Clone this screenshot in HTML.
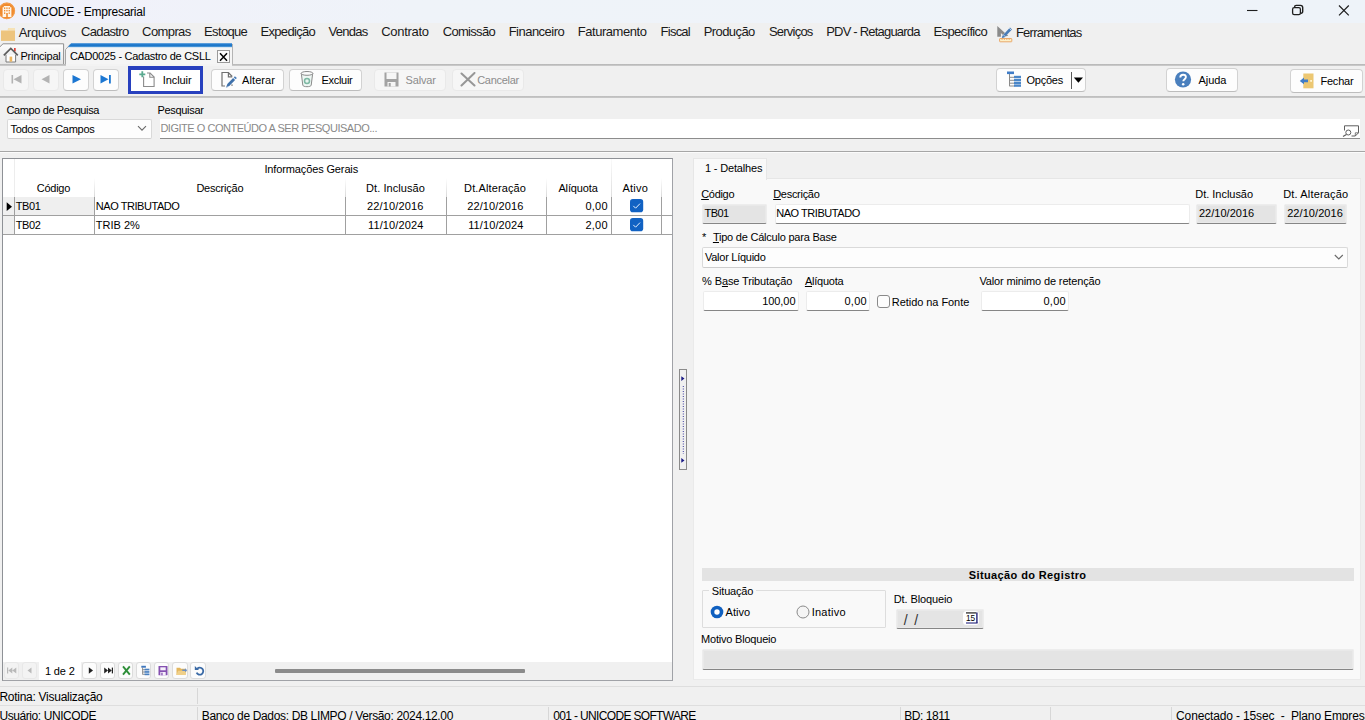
<!DOCTYPE html>
<html lang="pt-BR"><head><meta charset="utf-8"><title>UNICODE - Empresarial</title>
<style>
*{box-sizing:border-box;margin:0;padding:0}
html,body{width:1365px;height:720px;overflow:hidden;background:#f0f0f0}
body{font-family:"Liberation Sans",sans-serif;font-size:11px;color:#000}
#app{position:relative;width:1365px;height:720px;overflow:hidden;background:#f0f0f0}
#app div,#app span,#app svg{position:absolute}
.t{white-space:pre;display:block}
.t u{text-decoration:underline;text-underline-offset:1px;text-decoration-thickness:1px}
.btn{background:#fdfdfd;border:1px solid #d2d2d2;border-bottom-color:#bdbdbd;border-radius:4px}
.btn.dis{background:#f6f6f6;border-color:#e9e9e9}
.inp{background:#fff;border:1px solid #ececec;border-bottom:1px solid #868686;border-radius:2px}
.inp.ro{background:#e4e4e4;border-color:#ededed;border-bottom-color:#868686;box-shadow:inset 0 0 0 1px #e9e9e9}
.vl{width:1px;background:#a0a0a0}
.hl{height:1px;background:#a0a0a0}
.nb{background:#fcfcfc;border:1px solid #dcdcdc;border-radius:3px}
.nb.dis{background:#f3f3f3;border-color:#e8e8e8}
.sd{width:1px;background:#d7d7d7}

</style></head><body>
<div id="app">
<!-- title bar -->
<div id="title" style="left:0;top:0;width:1365px;height:23px;background:linear-gradient(90deg,#f1f1fa,#eff3f9 30%,#eef3f9)"></div>
<svg style="left:-3px;top:2px" width="19" height="19" viewBox="0 0 19 19"><circle cx="9.800" cy="8.900" r="8.300" fill="#f08a2e"/><circle cx="9.800" cy="8.900" r="7.700" fill="none" stroke="#f6a75c" stroke-width=".7"/><path d="M5.600 15V5.200h1.200V3.900h6.300v1.300h1.300V15z" fill="#fff6ea"/><g fill="#f08a2e"><rect x="7" y="5.400" width="1.300" height="1.500"/><rect x="9.300" y="5.400" width="1.300" height="1.500"/><rect x="11.600" y="5.400" width="1.300" height="1.500"/><rect x="7" y="7.900" width="1.300" height="1.500"/><rect x="9.300" y="7.900" width="1.300" height="1.500"/><rect x="11.600" y="7.900" width="1.300" height="1.500"/><rect x="7" y="10.400" width="1.300" height="1.500"/><rect x="11.600" y="10.400" width="1.300" height="1.500"/><rect x="9.200" y="11" width="1.600" height="4"/></g></svg>
<svg style="left:1240px;top:0" width="125" height="23" viewBox="0 0 125 23" fill="none" stroke="#1f1f1f" stroke-width="1.100"><path d="M7 10.500h10.500"/><rect x="52.600" y="7.700" width="7.800" height="7" rx="1.600" stroke-width="1.300"/><path d="M54.600 7.400v-.4a1.600 1.600 0 0 1 1.600-1.600h4.300a2.200 2.200 0 0 1 2.200 2.200v4a1.600 1.600 0 0 1-1.600 1.600h-.5" stroke-width="1.400"/><path d="M99 5.500l9.800 9.800M108.800 5.500l-9.800 9.800" stroke-width="1.200"/></svg>
<!-- menu folder + ferramentas icons -->
<svg style="left:0;top:26px" width="18" height="18" viewBox="0 0 18 18"><path d="M7.800 4.800L8.600 2h6.400v3z" fill="#f6e2b6"/><rect x="1" y="4.600" width="14" height="10.300" fill="#edc47d"/><path d="M1 4.600h6.800L8.600 2" fill="none" stroke="#f3d9a3" stroke-width=".6"/></svg>
<svg style="left:997px;top:25px" width="17" height="18" viewBox="0 0 17 18"><path d="M0.300 1v10.700h3.600V8l2 2L8 8z" fill="#8a8a8a"/><path d="M7.200 11.700l4-1 -1.500-1.500z" fill="#8a8a8a"/><path d="M5.400 10.800L13 2.600l2 1.900-7.700 8.100-2.500.5z" fill="#4a7db8"/><path d="M12.300 3.300l1.900 1.900M6.300 9.700l1.900 1.900" stroke="#eef3fa" stroke-width=".7"/><rect x="2.600" y="13.500" width="12.200" height="3.300" rx=".5" fill="#fdf0c8" stroke="#e8a160" stroke-width=".9"/><path d="M5 13.500v1.500M7.400 13.500v1.500M9.800 13.500v1.500M12.200 13.500v1.500" stroke="#e8a160" stroke-width=".8"/></svg>
<!-- tab strip -->
<svg style="left:0;top:42px" width="240" height="24" viewBox="0 0 240 24"><defs><linearGradient id="tg" x1="0" y1="0" x2="0" y2="1"><stop offset="0" stop-color="#fdfdfd"/><stop offset="1" stop-color="#e6e6e6"/></linearGradient><linearGradient id="bl" x1="0" y1="0" x2="0" y2="1"><stop offset="0" stop-color="#2a82d3"/><stop offset=".7" stop-color="#1b74c6"/><stop offset="1" stop-color="#7dbbea"/></linearGradient></defs><path d="M-1 5.700L3 1.800h60.600V22.500H-1z" fill="url(#tg)" stroke="#8f8f8f" stroke-width="1"/><path d="M65.500 23V7.600L70.800 1.800H232.500V23z" fill="#f5f5f5"/><path d="M65.500 23V7.600L70.800 1.800" fill="none" stroke="#a6a6a6" stroke-width="1"/><path d="M232.500 2V23" stroke="#b4b4b4" stroke-width="1"/><path d="M71.200 1.300H232v3.900H67.600z" fill="url(#bl)"/></svg>
<svg style="left:3px;top:46px" width="16" height="18" viewBox="0 0 16 18"><rect x="11" y="2" width="1.700" height="3.500" fill="#e0453a"/><path d="M3 8.800V16h9.600V8.800" fill="#fdfdfd" stroke="#7a7a7a" stroke-width="1"/><path d="M0.800 9.300L7.800 2.500l7 6.800" fill="none" stroke="#5c5c5c" stroke-width="1.700" stroke-linejoin="miter"/><rect x="6.600" y="10.600" width="2.600" height="5" fill="#eeb65f"/></svg>
<div style="left:216.5px;top:49.5px;width:13px;height:13.5px;background:#fbfbfb;border:1px solid #9a9a9a"></div>
<svg style="left:216.500px;top:49.500px" width="13" height="14" viewBox="0 0 13 14"><path d="M3 3.300l7 7.400M10 3.300l-7 7.400" stroke="#000" stroke-width="1.500"/></svg>
<div style="left:0;top:64px;width:1365px;height:2px;background:linear-gradient(#b4b4b4,#cfcfcf)"></div>
<div style="left:66px;top:64px;width:166px;height:2px;background:#f3f3f3"></div>
<!-- toolbar -->
<div class="btn dis" style="left:2.6px;top:68.600px;width:26.800px;height:22.400px"></div>
<div class="btn dis" style="left:32.6px;top:68.600px;width:26.800px;height:22.400px"></div>
<div class="btn" style="left:62.6px;top:68.600px;width:26.800px;height:22.400px"></div>
<div class="btn" style="left:92.6px;top:68.600px;width:26.800px;height:22.400px"></div>
<svg style="left:2.700px;top:68.300px" width="116" height="22" viewBox="0 0 116 22"><g fill="#b3b3b3"><rect x="8.500" y="7" width="1.600" height="8.500"/><path d="M18.500 7v8.500L10.500 11.250z"/><path d="M46.500 7v8.500L38.500 11.250z"/></g><g fill="#1b76d2"><path d="M69.500 7v8.500l8.500-4.250z"/><path d="M97.500 7v8.500l8-4.250z"/><rect x="106" y="7" width="1.800" height="8.500"/></g></svg>
<div style="left:128px;top:66px;width:75px;height:27.800px;background:#fff;border:solid #2740be;border-width:4px 3.600px 3.800px 3.500px"></div>
<svg style="left:138px;top:70px" width="18" height="18" viewBox="0 0 18 18" fill="none"><path d="M5.600 6.500v10h10.500V7l-4-4H9" stroke="#8c8c8c" stroke-width="1.100"/><path d="M11.800 3v4.300h4.300" stroke="#8c8c8c" stroke-width="1.100"/><path d="M4.300 1.300v6M1.300 4.300h6" stroke="#5aa98f" stroke-width="1.800"/></svg>
<div class="btn" style="left:211px;top:69px;width:73px;height:22px"></div>
<svg style="left:220px;top:71px" width="18" height="18" viewBox="0 0 18 18" fill="none"><path d="M5 15h-3V1.500h6.400l3.800 4" stroke="#707070" stroke-width="1.200"/><path d="M8.400 1.500v4.300h3.800" stroke="#707070" stroke-width="1.200"/><path d="M11.300 14.200h1.400" stroke="#707070" stroke-width="1.200"/><path d="M6.300 16.200l1-3.200 5.800-6 2 1.900-5.800 6z" fill="#3f71ab"/><path d="M13.700 6.400l1.200-1.200 2 1.900-1.200 1.200z" fill="#4a7db8"/><path d="M5.900 16.700l.8-2.300 1.500 1.500z" fill="#8aa7cc"/></svg>
<div class="btn" style="left:289px;top:69px;width:73px;height:22px"></div>
<svg style="left:299px;top:70px" width="16" height="18" viewBox="0 0 16 18" fill="none"><path d="M2.300 3.400l1.500 11.800c.2 1 2 1.500 4.200 1.500s4-.5 4.200-1.500l1.500-11.800" fill="#eef7f3" stroke="#8a8a8a" stroke-width="1"/><ellipse cx="8" cy="3.400" rx="5.900" ry="1.900" fill="#fbfbfb" stroke="#8a8a8a" stroke-width="1"/><circle cx="8" cy="11" r="2.500" fill="#e9f5f0" stroke="#7db8a3" stroke-width="1.500"/></svg>
<div class="btn dis" style="left:374px;top:69px;width:72px;height:22px"></div>
<svg style="left:384px;top:72px" width="15" height="15" viewBox="0 0 15 15"><path d="M0.500 0.500h14v14h-14z" fill="#a3a3a3"/><rect x="2.500" y="0.500" width="10" height="6.500" fill="#f6f6f6"/><rect x="3.500" y="10" width="8" height="4.500" fill="#f6f6f6"/><rect x="4.700" y="11" width="2" height="3.500" fill="#a3a3a3"/></svg>
<div class="btn dis" style="left:452px;top:69px;width:72px;height:22px"></div>
<svg style="left:460px;top:72px" width="16" height="15" viewBox="0 0 16 15"><path d="M1.500 1.500l13 12M14.500 1l-13 12.500" stroke="#979797" stroke-width="2" stroke-linecap="round"/></svg>
<div class="btn" style="left:996px;top:68px;width:90px;height:23.500px"></div>
<svg style="left:1006px;top:71px" width="16" height="16" viewBox="0 0 16 16"><path d="M3.500 3v12.200M3.500 6.300h5M3.500 9.300h5M3.500 12.200h5M3.500 15h5" stroke="#8a8a8a" stroke-width="1" fill="none"/><rect x="1" y="0.500" width="7" height="2.600" fill="#3f7cc7"/><g fill="#4a86c8"><rect x="8" y="4.800" width="7" height="2.400"/><rect x="8" y="7.900" width="7" height="2.400"/><rect x="8" y="10.900" width="7" height="2.400"/><rect x="8" y="13.600" width="7" height="2.200"/></g></svg>
<div style="left:1071px;top:71.500px;width:1.400px;height:17px;background:#5a5a5a"></div>
<svg style="left:1073px;top:77px" width="11" height="7" viewBox="0 0 11 7"><path d="M0.800 0.400h9.200L5.400 5.800z" fill="#000"/></svg>
<div class="btn" style="left:1165.500px;top:68px;width:72px;height:23.500px"></div>
<svg style="left:1174px;top:71px" width="18" height="18" viewBox="0 0 18 18"><circle cx="9" cy="8.500" r="8.100" fill="#4a7fbd"/><path d="M6.300 6.400c0-1.700 1.200-2.700 2.800-2.700s2.800 1 2.800 2.400c0 1.300-.8 1.800-1.600 2.400-.7.500-1 .9-1 1.800" fill="none" stroke="#fff" stroke-width="1.900"/><circle cx="9.200" cy="13.200" r="1.250" fill="#fff"/></svg>
<div class="btn" style="left:1289.500px;top:69px;width:73.500px;height:23.500px"></div>
<svg style="left:1299px;top:72px" width="16" height="17" viewBox="0 0 16 17"><rect x="4.300" y="1.500" width="10.200" height="14.800" fill="#ecc772"/><rect x="11.200" y="8" width="1.800" height="1.800" fill="#fff3d0"/><path d="M9 7.600v2.600H5v2L0.800 8.900 5 5.600v2z" fill="#3f7cc7"/></svg>
<div style="left:0;top:96px;width:1365px;height:2px;background:linear-gradient(#bcbcbc,#c9c9c9)"></div>
<!-- search panel -->
<div style="left:7px;top:118.500px;width:145px;height:20px;background:#fdfdfd;border:1px solid #d9d9d9;border-bottom-color:#cfcfcf;border-radius:2px"></div>
<svg style="left:137px;top:125px" width="10" height="7" viewBox="0 0 10 7"><path d="M1 1.200l4 4 4-4" stroke="#6a6a6a" stroke-width="1.100" fill="none"/></svg>
<div style="left:159.500px;top:118.700px;width:1200.300px;height:20px;background:#fff;border-bottom:1px solid #8c8c8c"></div>
<svg style="left:1342px;top:124px" width="18" height="14" viewBox="0 0 18 14" fill="none" stroke="#5e5e5e" stroke-width="1"><path d="M2.500 6.500V1.800h14v7l-3.200 3.200H9.500"/><path d="M13.300 12V8.800h3.200" stroke-width=".8"/><circle cx="6.300" cy="8.500" r="2.500" fill="#fff"/><path d="M4.400 10.400L1 12.600" stroke-width="1.200"/></svg>
<div style="left:0;top:151px;width:1365px;height:1px;background:#a6a6a6"></div><div style="left:0;top:152px;width:1365px;height:1px;background:#fbfbfb"></div>
<!-- GRID -->
<div id="grid" style="left:2px;top:158px;width:671px;height:523px;background:#fff;border:1px solid;border-color:#8e9196 #a0a2a7 #a0a2a7 #8e9196"></div>
<!-- header gradient separators -->
<div style="left:14px;top:159px;width:1px;height:38px;background:#ededed"></div>
<div style="left:94px;top:178px;width:1px;height:19px;background:linear-gradient(#fff,#d9d9d9)"></div>
<div style="left:345px;top:178px;width:1px;height:19px;background:linear-gradient(#fff,#d9d9d9)"></div>
<div style="left:446px;top:178px;width:1px;height:19px;background:linear-gradient(#fff,#d9d9d9)"></div>
<div style="left:546px;top:178px;width:1px;height:19px;background:linear-gradient(#fff,#d9d9d9)"></div>
<div style="left:610.500px;top:159px;width:1px;height:38px;background:linear-gradient(#fafafa,#dedede)"></div>
<div style="left:661px;top:178px;width:1px;height:19px;background:linear-gradient(#fff,#d9d9d9)"></div>
<!-- rows -->
<div style="left:3px;top:197px;width:11px;height:37px;background:#f0f0f0"></div>
<div style="left:15px;top:197px;width:79px;height:18px;background:#efefef"></div>
<div class="vl" style="left:14px;top:197px;height:38px"></div>
<div class="vl" style="left:94px;top:197px;height:38px"></div>
<div class="vl" style="left:345px;top:197px;height:38px"></div>
<div class="vl" style="left:446px;top:197px;height:38px"></div>
<div class="vl" style="left:546px;top:197px;height:38px"></div>
<div class="vl" style="left:610.500px;top:197px;height:38px"></div>
<div class="vl" style="left:661px;top:197px;height:38px"></div>
<div class="hl" style="left:3px;top:215px;width:669px"></div>
<div class="hl" style="left:3px;top:234px;width:669px"></div>
<svg style="left:6px;top:202px" width="7" height="10" viewBox="0 0 7 10"><path d="M0.700 0.300v8.800l5.300-4.400z" fill="#000"/></svg>
<svg style="left:629.500px;top:199px" width="14" height="14" viewBox="0 0 14 14"><rect x="0" y="0" width="13.200" height="13.200" rx="2.800" fill="#1162c3"/><path d="M3.300 6.900l2.300 2.300 4.400-4.600" stroke="#e3efff" stroke-width="1" fill="none"/></svg>
<svg style="left:629.500px;top:218px" width="14" height="14" viewBox="0 0 14 14"><rect x="0" y="0" width="13.200" height="13.200" rx="2.800" fill="#1162c3"/><path d="M3.300 6.900l2.300 2.300 4.400-4.600" stroke="#e3efff" stroke-width="1" fill="none"/></svg>
<!-- grid footer -->
<div style="left:3px;top:661.500px;width:669px;height:18.500px;background:#f0f0f0"></div>
<div style="left:39px;top:661.500px;width:42px;height:18.500px;background:#fff"></div>
<div class="nb dis" style="left:3.9px;top:661.500px;width:15.500px;height:17px"></div>
<div class="nb dis" style="left:21.9px;top:661.500px;width:15.500px;height:17px"></div>
<div class="nb" style="left:81.9px;top:661.500px;width:15.500px;height:17px"></div>
<div class="nb" style="left:99.9px;top:661.500px;width:15.500px;height:17px"></div>
<div class="nb" style="left:117.9px;top:661.500px;width:15.500px;height:17px"></div>
<div class="nb" style="left:135.9px;top:661.500px;width:15.500px;height:17px"></div>
<div class="nb" style="left:153.9px;top:661.500px;width:15.500px;height:17px"></div>
<div class="nb" style="left:172.1px;top:661.500px;width:15.500px;height:17px"></div>
<div class="nb" style="left:190.4px;top:661.500px;width:15.500px;height:17px"></div>
<svg style="left:2.700px;top:661.500px" width="205" height="17" viewBox="0 0 205 17"><g fill="#b9b9b9"><rect x="4" y="5.500" width="1.200" height="6"/><path d="M9.300 5.500v6L5.300 8.500zM13.300 5.500v6L9.300 8.500z"/><path d="M28.500 5.500v6L24.500 8.500z"/></g><g fill="#222"><path d="M85.800 5.300v6.400l4.200-3.200z"/><path d="M101.200 5.600v5.800l3.800-2.900zM105 5.600v5.800l3.800-2.900z"/><rect x="108.800" y="5.600" width="1.200" height="5.800"/></g><path d="M120 4.300l6.800 8.400M126.800 4.300l-6.800 8.400" stroke="#2f8f3a" stroke-width="1.900"/><g><rect x="138.300" y="3.800" width="4.600" height="1.900" fill="#3f78c0"/><path d="M139.600 5.500v7M139.600 7.700h2.500M139.600 10h2.500M139.600 12.300h2.500" stroke="#777" stroke-width=".8" fill="none"/><rect x="141.600" y="6.700" width="4.800" height="1.700" fill="#4a80c0"/><rect x="141.600" y="9.100" width="4.800" height="1.700" fill="#4a80c0"/><rect x="141.600" y="11.500" width="4.800" height="1.700" fill="#4a80c0"/></g><g><rect x="155.500" y="4" width="9" height="9.300" rx=".6" fill="#8450b0"/><rect x="157.300" y="5.300" width="5.400" height="3" fill="#f6f0fb"/><rect x="157.300" y="10" width="5.400" height="3.300" fill="#f6f0fb"/><rect x="158.300" y="10.700" width="1.300" height="2.600" fill="#8450b0"/></g><g><path d="M173.500 5.800h3.600l.9 1h4.600v6.200h-9.100z" fill="#e3b65c"/><path d="M173.500 13l1.500-4.300h8.600l-1.500 4.300z" fill="#f0d08a"/><path d="M179.300 7.500h2.800v-1.300l2.100 2-2.100 2v-1.300h-2.800z" fill="#6b8fc4"/></g><g fill="none" stroke="#3a6aa6" stroke-width="1.800"><path d="M194.200 6.800a3.500 3.500 0 1 1-0.600 3.900"/></g><path d="M191.800 3.900v4.200h4.200z" fill="#3a6aa6"/></svg>
<div style="left:275px;top:668.600px;width:250px;height:4px;background:#8b8b8b;border-radius:1px"></div>
<!-- splitter -->
<div style="left:679px;top:369px;width:8px;height:101px;background:#f0f0f0;border:1px solid #8a8a8a"></div>
<svg style="left:680px;top:370px" width="6" height="99" viewBox="0 0 6 99"><path d="M1.300 6.200v4.800l3.200-2.400zM1.300 88v4.800l3.200-2.400z" fill="#1c1c86"/><path d="M3.300 16v68" stroke="#3a3aa0" stroke-width="1" stroke-dasharray="1 1.500"/></svg>
<!-- RIGHT PANEL -->
<div style="left:692.500px;top:178px;width:668px;height:501.500px;background:#f9f9f9;border:1px solid #eaeaea;border-top:none"></div>
<div style="left:692.500px;top:178px;width:668px;height:1px;background:#e6e6e6"></div>
<div style="left:692.500px;top:157.500px;width:74px;height:22px;background:#f9f9f9;border:1px solid #e6e6e6;border-bottom:none"></div>
<div class="inp ro" style="left:702px;top:204px;width:64.500px;height:20px"></div>
<div class="inp" style="left:774.500px;top:204px;width:415px;height:20px"></div>
<div class="inp ro" style="left:1196px;top:204px;width:80.500px;height:20px"></div>
<div class="inp ro" style="left:1284px;top:204px;width:63px;height:20px"></div>
<div style="left:702px;top:246.500px;width:646px;height:21px;background:#fdfdfd;border:1px solid #dadada;border-bottom-color:#cdcdcd;border-radius:2px"></div>
<svg style="left:1334px;top:254px" width="10" height="7" viewBox="0 0 10 7"><path d="M0.800 1l4 4 4-4" stroke="#6a6a6a" stroke-width="1.100" fill="none"/></svg>
<div class="inp" style="left:702.500px;top:290.500px;width:96px;height:20px"></div>
<div class="inp" style="left:805.500px;top:290.500px;width:64.500px;height:20px"></div>
<div style="left:877px;top:295.300px;width:13px;height:12.600px;background:#fdfdfd;border:1px solid #8a8a8a;border-radius:3px"></div>
<div class="inp" style="left:981px;top:290.500px;width:87.500px;height:20px"></div>
<!-- situacao -->
<div style="left:702px;top:568px;width:652px;height:13px;background:#e3e3e3"></div>
<div style="left:702px;top:589.500px;width:183.500px;height:38.500px;border:1px solid #dddddd;border-radius:1px"></div>
<div style="left:709px;top:587px;width:47px;height:6px;background:#f9f9f9"></div>
<svg style="left:709.500px;top:605px" width="14" height="14" viewBox="0 0 14 14"><circle cx="7" cy="7" r="6.300" fill="#1060c0"/><circle cx="7" cy="7" r="2.700" fill="#fff"/></svg>
<svg style="left:795.500px;top:605px" width="14" height="14" viewBox="0 0 14 14"><circle cx="7" cy="7" r="6" fill="#f5f5f5" stroke="#8a8a8a" stroke-width="1"/></svg>
<div class="inp ro" style="left:895.500px;top:608.500px;width:88px;height:20.500px"></div>
<div style="left:962.700px;top:611.200px;width:16.500px;height:14.200px;background:#fff;border-radius:3.500px"></div>
<svg style="left:964px;top:611px" width="16" height="15" viewBox="0 0 16 15"><path d="M2 1.900h10.300" stroke="#4a4a4a" stroke-width="1.500"/><path d="M12.900 1.600V12" stroke="#23237a" stroke-width="1.400"/><path d="M2 12h11.600" stroke="#23237a" stroke-width="1.100"/><text x="2" y="10.300" font-family="Liberation Sans, sans-serif" font-size="8.600" fill="#000" textLength="9.200" lengthAdjust="spacingAndGlyphs">15</text></svg>
<div class="inp ro" style="left:702px;top:649px;width:651.500px;height:20.500px"></div>
<!-- STATUS BARS -->
<div style="left:0;top:686px;width:1365px;height:1px;background:#dedede"></div>
<div style="left:0;top:705px;width:1365px;height:1px;background:#dedede"></div>
<div class="sd" style="left:197px;top:688px;height:16px"></div>
<div class="sd" style="left:197px;top:707px;height:13px"></div>
<div class="sd" style="left:548px;top:707px;height:13px"></div>
<div class="sd" style="left:900px;top:707px;height:13px"></div>
<div class="sd" style="left:1050px;top:707px;height:13px"></div>
<div class="sd" style="left:1171px;top:707px;height:13px"></div>

<span class="t" id="t0" style="left:20.40px;top:4px;font-size:12px;line-height:16px;color:#000;letter-spacing:-0.253px;">UNICODE - Empresarial</span>
<span class="t" id="t1" style="left:18.80px;top:24px;font-size:13px;line-height:17px;color:#1a1a1a;letter-spacing:-0.400px;">Arquivos</span>
<span class="t" id="t2" style="left:81.10px;top:23px;font-size:13px;line-height:17px;color:#1a1a1a;letter-spacing:-0.671px;">Cadastro</span>
<span class="t" id="t3" style="left:142.10px;top:23px;font-size:13px;line-height:17px;color:#1a1a1a;letter-spacing:-0.596px;">Compras</span>
<span class="t" id="t4" style="left:204.10px;top:23px;font-size:13px;line-height:17px;color:#1a1a1a;letter-spacing:-0.660px;">Estoque</span>
<span class="t" id="t5" style="left:260.40px;top:23px;font-size:13px;line-height:17px;color:#1a1a1a;letter-spacing:-0.660px;">Expedição</span>
<span class="t" id="t6" style="left:328.60px;top:23px;font-size:13px;line-height:17px;color:#1a1a1a;letter-spacing:-0.749px;">Vendas</span>
<span class="t" id="t7" style="left:381.20px;top:23px;font-size:13px;line-height:17px;color:#1a1a1a;letter-spacing:-0.287px;">Contrato</span>
<span class="t" id="t8" style="left:442.70px;top:23px;font-size:13px;line-height:17px;color:#1a1a1a;letter-spacing:-0.690px;">Comissão</span>
<span class="t" id="t9" style="left:508.70px;top:23px;font-size:13px;line-height:17px;color:#1a1a1a;letter-spacing:-0.522px;">Financeiro</span>
<span class="t" id="t10" style="left:577.70px;top:23px;font-size:13px;line-height:17px;color:#1a1a1a;letter-spacing:-0.448px;">Faturamento</span>
<span class="t" id="t11" style="left:660.60px;top:23px;font-size:13px;line-height:17px;color:#1a1a1a;letter-spacing:-0.762px;">Fiscal</span>
<span class="t" id="t12" style="left:703.70px;top:23px;font-size:13px;line-height:17px;color:#1a1a1a;letter-spacing:-0.572px;">Produção</span>
<span class="t" id="t13" style="left:768.90px;top:23px;font-size:13px;line-height:17px;color:#1a1a1a;letter-spacing:-0.772px;">Serviços</span>
<span class="t" id="t14" style="left:826.20px;top:23px;font-size:13px;line-height:17px;color:#1a1a1a;letter-spacing:-0.797px;">PDV - Retaguarda</span>
<span class="t" id="t15" style="left:933.60px;top:23px;font-size:13px;line-height:17px;color:#1a1a1a;letter-spacing:-0.660px;">Específico</span>
<span class="t" id="t16" style="left:1015.90px;top:24px;font-size:13px;line-height:17px;color:#1a1a1a;letter-spacing:-0.729px;">Ferramentas</span>
<span class="t" id="t17" style="left:20.40px;top:49px;font-size:11px;line-height:15px;color:#000;letter-spacing:-0.225px;">Principal</span>
<span class="t" id="t18" style="left:69.90px;top:49px;font-size:11px;line-height:15px;color:#000;letter-spacing:-0.281px;">CAD0025 - Cadastro de CSLL</span>
<span class="t" id="t19" style="left:162.80px;top:73px;font-size:11px;line-height:15px;color:#000;letter-spacing:-0.083px;">Incluir</span>
<span class="t" id="t20" style="left:242.10px;top:73px;font-size:11px;line-height:15px;color:#000;letter-spacing:0.079px;">Alterar</span>
<span class="t" id="t21" style="left:321.40px;top:73px;font-size:11px;line-height:15px;color:#000;letter-spacing:-0.279px;">Excluir</span>
<span class="t" id="t22" style="left:405.60px;top:73px;font-size:11px;line-height:15px;color:#8c8c8c;letter-spacing:-0.155px;">Salvar</span>
<span class="t" id="t23" style="left:477.20px;top:73px;font-size:11px;line-height:15px;color:#8c8c8c;letter-spacing:-0.296px;">Cancelar</span>
<span class="t" id="t24" style="left:1026.40px;top:73px;font-size:11px;line-height:15px;color:#000;letter-spacing:-0.210px;">Opções</span>
<span class="t" id="t25" style="left:1198.60px;top:73px;font-size:11px;line-height:15px;color:#000;letter-spacing:-0.076px;">Ajuda</span>
<span class="t" id="t26" style="left:1320.40px;top:74px;font-size:11px;line-height:15px;color:#000;letter-spacing:-0.182px;">Fechar</span>
<span class="t" id="t27" style="left:6.40px;top:103px;font-size:11px;line-height:15px;color:#000;letter-spacing:-0.377px;">Campo de Pesquisa</span>
<span class="t" id="t28" style="left:157.40px;top:103px;font-size:11px;line-height:15px;color:#000;letter-spacing:-0.307px;">Pesquisar</span>
<span class="t" id="t29" style="left:10.40px;top:122px;font-size:11px;line-height:15px;color:#000;letter-spacing:-0.259px;">Todos os Campos</span>
<span class="t" id="t30" style="left:160.40px;top:121px;font-size:11px;line-height:15px;color:#8a8a8a;letter-spacing:-0.472px;">DIGITE O CONTEÚDO A SER PESQUISADO...</span>
<span class="t" id="t31" style="left:264.40px;top:162px;font-size:11px;line-height:15px;color:#000;letter-spacing:-0.129px;">Informações Gerais</span>
<span class="t" id="t32" style="left:36.80px;top:181px;font-size:11px;line-height:15px;color:#000;letter-spacing:-0.267px;">Código</span>
<span class="t" id="t33" style="left:196.40px;top:181px;font-size:11px;line-height:15px;color:#000;letter-spacing:-0.216px;">Descrição</span>
<span class="t" id="t34" style="left:366.00px;top:181px;font-size:11px;line-height:15px;color:#000;letter-spacing:0.072px;">Dt. Inclusão</span>
<span class="t" id="t35" style="left:464.10px;top:181px;font-size:11px;line-height:15px;color:#000;letter-spacing:0.119px;">Dt.Alteração</span>
<span class="t" id="t36" style="left:558.40px;top:181px;font-size:11px;line-height:15px;color:#000;letter-spacing:-0.139px;">Alíquota</span>
<span class="t" id="t37" style="left:622.60px;top:181px;font-size:11px;line-height:15px;color:#000;letter-spacing:0.178px;">Ativo</span>
<span class="t" id="t38" style="left:15.70px;top:199px;font-size:11px;line-height:15px;color:#000;letter-spacing:-0.384px;">TB01</span>
<span class="t" id="t39" style="left:95.80px;top:199px;font-size:11px;line-height:15px;color:#000;letter-spacing:-0.444px;">NAO TRIBUTADO</span>
<span class="t" id="t40" style="left:367.00px;top:199px;font-size:11px;line-height:15px;color:#000;letter-spacing:0.140px;">22/10/2016</span>
<span class="t" id="t41" style="left:467.20px;top:199px;font-size:11px;line-height:15px;color:#000;letter-spacing:0.120px;">22/10/2016</span>
<span class="t" id="t42" style="left:585.40px;top:199px;font-size:11px;line-height:15px;color:#000;letter-spacing:0.235px;">0,00</span>
<span class="t" id="t43" style="left:15.70px;top:218px;font-size:11px;line-height:15px;color:#000;letter-spacing:-0.384px;">TB02</span>
<span class="t" id="t44" style="left:95.80px;top:218px;font-size:11px;line-height:15px;color:#000;letter-spacing:0.006px;">TRIB 2%</span>
<span class="t" id="t45" style="left:368.00px;top:218px;font-size:11px;line-height:15px;color:#000;letter-spacing:0.121px;">11/10/2024</span>
<span class="t" id="t46" style="left:468.20px;top:218px;font-size:11px;line-height:15px;color:#000;letter-spacing:0.101px;">11/10/2024</span>
<span class="t" id="t47" style="left:585.40px;top:218px;font-size:11px;line-height:15px;color:#000;letter-spacing:0.235px;">2,00</span>
<span class="t" id="t48" style="left:44.90px;top:664px;font-size:11px;line-height:15px;color:#000;letter-spacing:-0.139px;">1 de 2</span>
<span class="t" id="t49" style="left:705.00px;top:161px;font-size:11px;line-height:15px;color:#000;letter-spacing:-0.171px;">1 - Detalhes</span>
<span class="t" id="t50" style="left:701.20px;top:187px;font-size:11px;line-height:15px;color:#000;letter-spacing:-0.302px;"><u>C</u>ódigo</span>
<span class="t" id="t51" style="left:773.20px;top:187px;font-size:11px;line-height:15px;color:#000;letter-spacing:-0.285px;"><u>D</u>escrição</span>
<span class="t" id="t52" style="left:1195.30px;top:187px;font-size:11px;line-height:15px;color:#000;letter-spacing:-0.028px;">Dt. Inclusão</span>
<span class="t" id="t53" style="left:1283.20px;top:187px;font-size:11px;line-height:15px;color:#000;letter-spacing:0.160px;">Dt. Alteração</span>
<span class="t" id="t54" style="left:704.60px;top:206px;font-size:11px;line-height:15px;color:#000;letter-spacing:-0.584px;">TB01</span>
<span class="t" id="t55" style="left:776.20px;top:206px;font-size:11px;line-height:15px;color:#000;letter-spacing:-0.452px;">NAO TRIBUTADO</span>
<span class="t" id="t56" style="left:1198.90px;top:206px;font-size:11px;line-height:15px;color:#000;letter-spacing:0.030px;">22/10/2016</span>
<span class="t" id="t57" style="left:1287.20px;top:206px;font-size:11px;line-height:15px;color:#000;letter-spacing:0.060px;">22/10/2016</span>
<span class="t" id="t58" style="left:702.10px;top:230px;font-size:11px;line-height:15px;color:#000;letter-spacing:0.679px;">*</span>
<span class="t" id="t59" style="left:712.90px;top:230px;font-size:11px;line-height:15px;color:#000;letter-spacing:-0.219px;"><u>T</u>ipo de Cálculo para Base</span>
<span class="t" id="t60" style="left:705.00px;top:250px;font-size:11px;line-height:15px;color:#000;letter-spacing:-0.266px;">Valor Líquido</span>
<span class="t" id="t61" style="left:702.10px;top:274px;font-size:11px;line-height:15px;color:#000;letter-spacing:-0.123px;">% B<u>a</u>se Tributação</span>
<span class="t" id="t62" style="left:804.90px;top:274px;font-size:11px;line-height:15px;color:#000;letter-spacing:-0.227px;"><u>A</u>líquota</span>
<span class="t" id="t63" style="left:979.40px;top:274px;font-size:11px;line-height:15px;color:#000;letter-spacing:-0.140px;">Valor minimo de retenção</span>
<span class="t" id="t64" style="left:762.20px;top:294px;font-size:11px;line-height:15px;color:#000;letter-spacing:-0.066px;">100,00</span>
<span class="t" id="t65" style="left:844.40px;top:294px;font-size:11px;line-height:15px;color:#000;letter-spacing:0.310px;">0,00</span>
<span class="t" id="t66" style="left:891.80px;top:295px;font-size:11px;line-height:15px;color:#000;letter-spacing:-0.055px;">Retido na Fonte</span>
<span class="t" id="t67" style="left:1043.40px;top:294px;font-size:11px;line-height:15px;color:#000;letter-spacing:0.285px;">0,00</span>
<span class="t" id="t68" style="left:968.80px;top:568px;font-size:11px;line-height:15px;color:#000;letter-spacing:0.381px;font-weight:700;">Situação do Registro</span>
<span class="t" id="t69" style="left:711.80px;top:584px;font-size:11px;line-height:15px;color:#000;letter-spacing:-0.169px;">Situação</span>
<span class="t" id="t70" style="left:725.60px;top:605px;font-size:11px;line-height:15px;color:#000;letter-spacing:-0.002px;">Ativo</span>
<span class="t" id="t71" style="left:811.70px;top:605px;font-size:11px;line-height:15px;color:#000;letter-spacing:0.234px;">Inativo</span>
<span class="t" id="t72" style="left:893.80px;top:592px;font-size:11px;line-height:15px;color:#000;letter-spacing:-0.123px;">Dt. Bloqueio</span>
<span class="t" id="t73" style="left:903.70px;top:611px;font-size:14px;line-height:18px;color:#333;letter-spacing:1.443px;">/ /</span>
<span class="t" id="t74" style="left:701.00px;top:632px;font-size:11px;line-height:15px;color:#000;letter-spacing:-0.201px;">Motivo Bloqueio</span>
<span class="t" id="t75" style="left:-0.60px;top:689px;font-size:12px;line-height:16px;color:#000;letter-spacing:-0.270px;">Rotina: Visualização</span>
<span class="t" id="t76" style="left:-0.60px;top:708px;font-size:12px;line-height:16px;color:#000;letter-spacing:-0.415px;">Usuário: UNICODE</span>
<span class="t" id="t77" style="left:201.80px;top:708px;font-size:12px;line-height:16px;color:#000;letter-spacing:-0.347px;">Banco de Dados: DB LIMPO / Versão: 2024.12.00</span>
<span class="t" id="t78" style="left:553.30px;top:708px;font-size:12px;line-height:16px;color:#000;letter-spacing:-0.659px;">001 - UNICODE SOFTWARE</span>
<span class="t" id="t79" style="left:904.30px;top:708px;font-size:12px;line-height:16px;color:#000;letter-spacing:-0.467px;">BD: 1811</span>
<span class="t" id="t80" style="left:1176.10px;top:708px;font-size:12px;line-height:16px;color:#000;letter-spacing:-0.146px;">Conectado - 15sec  -  Plano Empresarial</span>
</div>
</body></html>
